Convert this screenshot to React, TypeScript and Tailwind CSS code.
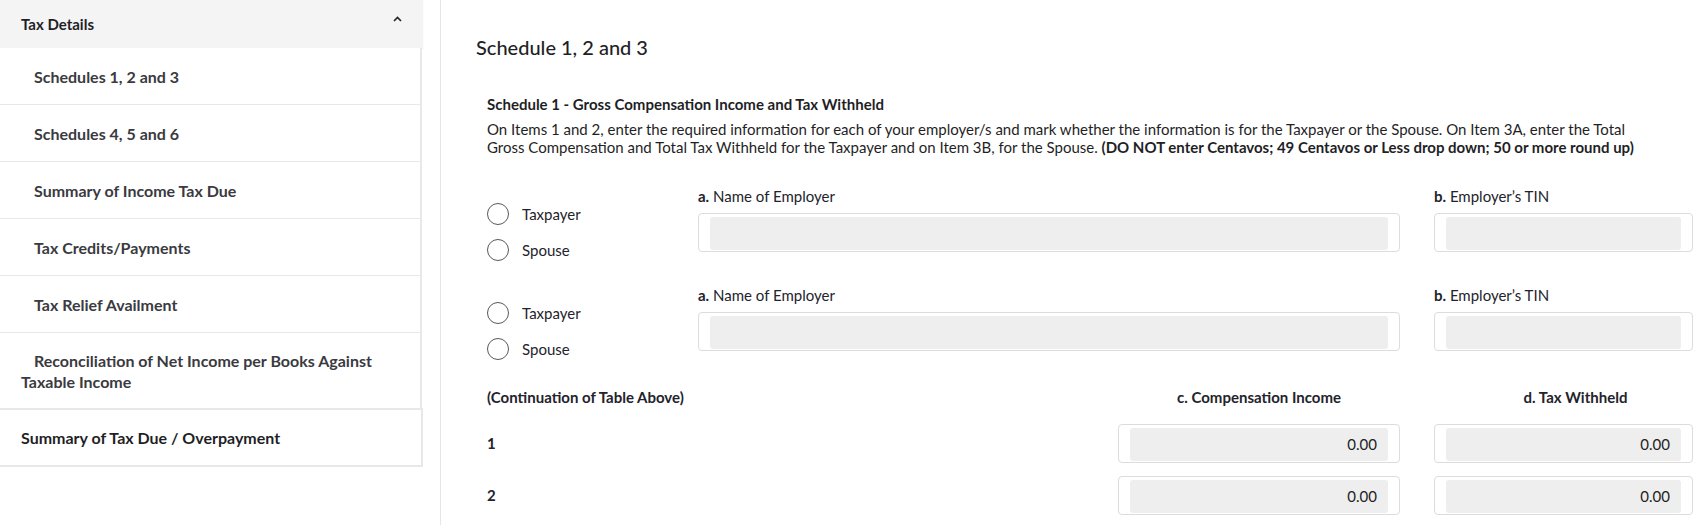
import React from "react";

const subItems = [
  "Schedules 1, 2 and 3",
  "Schedules 4, 5 and 6",
  "Summary of Income Tax Due",
  "Tax Credits/Payments",
  "Tax Relief Availment",
  "Reconciliation of Net Income per Books Against Taxable Income",
];

function Radio({ label }: { label: string }) {
  return (
    <label className="flex h-[36px] items-center gap-[13px]">
      <span className="h-[22px] w-[22px] rounded-full border-[1.5px] border-[#555a60] bg-white" />
      <span className="text-[15px] text-[#23232b]">{label}</span>
    </label>
  );
}

function Field({ value }: { value?: string }) {
  return (
    <div className="h-[39px] rounded-[4px] border border-[#dcdcdc] bg-white px-[11px] pt-[3px] pb-[1px]">
      <div className="flex h-full items-center justify-end rounded-[3px] bg-[#eeeeee] pr-[11px] text-[15px] text-[#222]">
        {value}
      </div>
    </div>
  );
}

function EmployerRow({ className }: { className?: string }) {
  return (
    <div className={"flex " + (className ?? "")}>
      <div className="flex w-[211px] shrink-0 flex-col pt-[10px]">
        <Radio label="Taxpayer" />
        <Radio label="Spouse" />
      </div>
      <div className="flex flex-1 flex-col">
        <div className="mb-[7px] h-[20px] text-[15px] leading-[20px] text-[#23232b]">
          <b>a.</b> Name of Employer
        </div>
        <Field />
      </div>
      <div className="ml-[34px] flex w-[259px] shrink-0 flex-col">
        <div className="mb-[7px] h-[20px] text-[15px] leading-[20px] text-[#23232b]">
          <b>b.</b> Employer’s TIN
        </div>
        <Field />
      </div>
    </div>
  );
}

function AmountRow({ num, className }: { num: string; className?: string }) {
  return (
    <div className={"flex items-center " + (className ?? "")}>
      <div className="flex-1 text-[15px] font-bold text-[#23232b]">{num}</div>
      <div className="w-[282px] shrink-0">
        <Field value="0.00" />
      </div>
      <div className="ml-[34px] w-[259px] shrink-0">
        <Field value="0.00" />
      </div>
    </div>
  );
}

export default function App() {
  return (
    <div
      className="flex h-[525px] w-full overflow-hidden bg-white text-[#23232b]"
      style={{ fontFamily: "Lato, 'Open Sans', sans-serif" }}
    >
      {/* sidebar */}
      <div className="w-[423px] shrink-0">
        <div className="flex h-[48px] items-center justify-between bg-[#f4f4f4] pl-[21px] pr-[21px] shadow-[0_1px_1px_rgba(0,0,0,0.06)]">
          <span className="text-[15px] font-bold text-[#1f1f26]">Tax Details</span>
          <svg width="9" height="6" viewBox="0 0 9 6" className="mb-[10px]">
            <polyline points="1,5 4.5,1.5 8,5" fill="none" stroke="#222" strokeWidth="1.6" />
          </svg>
        </div>
        <div className="w-[422px] border-r-2 border-[#e8e8e8] bg-white">
          {subItems.map((t, i) => (
            <div
              key={t}
              className={
                "flex items-center pl-[21px] pr-[40px] indent-[13px] text-[16px] font-bold leading-[21px] text-[#3a3a40] " +
                (i < subItems.length - 1 ? "h-[57px] border-b border-[#e8e8e8]" : "h-[75px]")
              }
            >
              <span>{t}</span>
            </div>
          ))}
        </div>
        <div className="flex h-[59px] items-center border-y-2 border-r-2 border-[#e8e8e8] pl-[21px] text-[16px] font-bold text-[#1f1f26]">
          Summary of Tax Due / Overpayment
        </div>
      </div>

      {/* main */}
      <div className="ml-[17px] flex flex-1 flex-col border-l border-[#e6e6e6] pl-[35px] pr-[9px] pt-[35px]">
        <h1 className="text-[20px] font-medium leading-[24px] text-[#1f1f26]">Schedule 1, 2 and 3</h1>
        <div className="pl-[11px]">
          <h2 className="mt-[35px] text-[15px] font-bold leading-[20px] text-[#1f1f26]">
            Schedule 1 - Gross Compensation Income and Tax Withheld
          </h2>
          <p className="mt-[6px] pr-[40px] text-[15px] leading-[18px] text-[#1f1f26]">
            On Items 1 and 2, enter the required information for each of your employer/s and mark whether the
            information is for the Taxpayer or the Spouse. On Item 3A, enter the Total Gross Compensation and Total
            Tax Withheld for the Taxpayer and on Item 3B, for the Spouse.{" "}
            <b>(DO NOT enter Centavos; 49 Centavos or Less drop down; 50 or more round up)</b>
          </p>

          <EmployerRow className="mt-[30px]" />
          <EmployerRow className="mt-[17px]" />

          <div className="mt-[20px] flex h-[20px] items-center text-[15px] font-bold text-[#23232b]">
            <div className="flex-1">(Continuation of Table Above)</div>
            <div className="w-[282px] shrink-0 text-center">c. Compensation Income</div>
            <div className="ml-[34px] w-[259px] shrink-0 pl-[24px] text-center">d. Tax Withheld</div>
          </div>
          <AmountRow num="1" className="mt-[17px]" />
          <AmountRow num="2" className="mt-[13px]" />
        </div>
      </div>
    </div>
  );
}
